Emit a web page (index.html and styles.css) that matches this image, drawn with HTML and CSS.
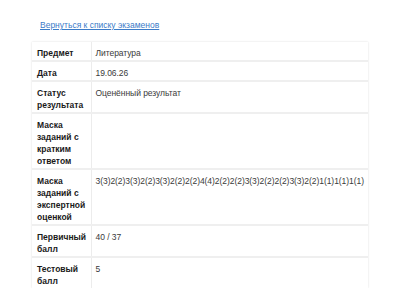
FILE: index.html
```html
<!DOCTYPE html>
<html lang="ru">
<head>
<meta charset="utf-8">
<link rel="stylesheet" href="styles.css">
</head>
<body>
<div class="page">
  <a class="back" href="#">Вернуться к списку экзаменов</a>
  <table class="exam">
    <colgroup><col class="c-label"><col class="c-value"></colgroup>
    <tr><th>Предмет</th><td>Литература</td></tr>
    <tr><th>Дата</th><td>19.06.26</td></tr>
    <tr><th>Статус результата</th><td>Оценённый результат</td></tr>
    <tr><th>Маска заданий с кратким ответом</th><td></td></tr>
    <tr><th>Маска заданий с экспертной оценкой</th><td>3(3)2(2)3(3)2(2)3(3)2(2)2(2)4(4)2(2)2(2)3(3)2(2)2(2)3(3)2(2)1(1)1(1)1(1)</td></tr>
    <tr><th>Первичный балл</th><td>40 / 37</td></tr>
    <tr><th>Тестовый балл</th><td>5</td></tr>
  </table>
</div>
</body>
</html>
```
FILE: styles.css
```css
html, body {
  margin: 0;
  padding: 0;
  background: #fff;
}
.page {
  padding: 19px 32px 0 32px;
  font-family: "Liberation Sans", Arial, sans-serif;
  font-size: 8.5px;
  line-height: 12px;
  color: #222;
}
.back {
  display: block;
  margin-left: 8px;
  color: #3b7bc8;
  text-decoration: underline;
  height: 12px;
}
.exam {
  margin-top: 11px;
  width: 336px;
  table-layout: fixed;
  border-collapse: collapse;
  box-shadow: 0 0 2px rgba(0,0,0,0.14);
}
.c-label {
  width: 59px;
}
.exam tr {
  border-bottom: 2px solid #efefef;
}
.exam tr:last-child {
  border-bottom: none;
}
.exam th {
  text-align: left;
  vertical-align: top;
  font-weight: bold;
  padding: 5px 4px 1px 5px;
  border-right: 1px solid #ececec;
  color: #1a1a1a;
}
.exam td {
  vertical-align: top;
  padding: 5px 2px 1px 4px;
  font-weight: normal;
  color: #3a3a3a;
  white-space: nowrap;
  letter-spacing: -0.05px;
}
```
